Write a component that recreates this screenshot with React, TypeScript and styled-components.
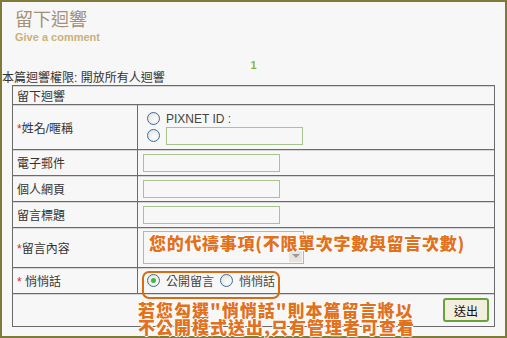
import React from "react";
import styled, { createGlobalStyle } from "styled-components";

const GlobalStyle = createGlobalStyle`
  body {
    margin: 0;
    background: #ffffff;
    font-family: "Liberation Sans", "Noto Sans CJK TC", sans-serif;
  }
`;

const CJK = `"Liberation Sans", "Noto Sans CJK TC", sans-serif`;

const Frame = styled.div`
  position: relative;
  width: 507px;
  height: 338px;
  box-sizing: border-box;
  border: 2px solid #7e7b38;
  background: #f7f7f7;
`;

const Header = styled.div`
  padding: 7px 0 0 13px;
`;

const Title = styled.h2`
  margin: 0;
  font-family: ${CJK};
  font-weight: normal;
  font-size: 18px;
  line-height: 22px;
  color: #a39078;
`;

const SubTitle = styled.div`
  font-family: "Liberation Sans", sans-serif;
  font-weight: bold;
  font-size: 11px;
  line-height: 12px;
  color: #cdb078;
`;

const Pager = styled.div`
  margin-top: 16px;
  text-align: center;
  font-family: "Liberation Sans", sans-serif;
  font-weight: bold;
  font-size: 11px;
  line-height: 13px;
  color: #8ab833;
`;

const Permission = styled.div`
  font-family: ${CJK};
  font-size: 12px;
  line-height: 13px;
  color: #333;
`;

const Table = styled.table`
  margin-left: 10px;
  width: 483px;
  border-collapse: collapse;
  border: 1px solid #6b6b6b;
  font-family: ${CJK};
  font-size: 12px;
  color: #333;
`;

const Row = styled.tr<{ $h: number }>`
  height: ${(p) => p.$h}px;
`;

const Cell = styled.td`
  border: 1px solid #6b6b6b;
  box-shadow: inset 0 1px 0 #d6d6d6;
  padding: 0 0 0 4px;
  vertical-align: middle;
`;

const LabelCell = styled(Cell)`
  width: 120px;
`;

const ValueCell = styled(Cell)`
  padding-left: 5px;
`;

const Star = styled.span`
  color: #e0202a;
`;

const TextInput = styled.div<{ $w?: number }>`
  width: ${(p) => p.$w ?? 137}px;
  height: 18px;
  box-sizing: border-box;
  border: 1px solid #a9c38c;
  background: #f7f7f7;
`;

const RadioLine = styled.div`
  display: flex;
  align-items: center;
  gap: 6px;
  height: 16px;
  & + & {
    margin-top: 1px;
  }
`;

const Radio = styled.span<{ $on?: boolean }>`
  position: relative;
  display: inline-block;
  width: 11px;
  height: 11px;
  border-radius: 50%;
  border: 1px solid #3f6c9c;
  background: radial-gradient(circle at 60% 60%, #ffffff 0%, #dcdcd6 100%);
  flex: none;
  &::after {
    content: "";
    display: ${(p) => (p.$on ? "block" : "none")};
    position: absolute;
    left: 3px;
    top: 3px;
    width: 5px;
    height: 5px;
    border-radius: 50%;
    background: #3dbb3a;
  }
`;

const RadioText = styled.span`
  font-size: 12px;
  color: #444;
`;

const NameBlock = styled.div`
  padding-left: 4px;
`;

const TextArea = styled.div`
  position: relative;
  width: 161px;
  height: 33px;
  box-sizing: border-box;
  border: 1px solid #a9c38c;
  background: #f7f7f7;
`;

const ScrollArrow = styled.div`
  position: absolute;
  right: 1px;
  bottom: 1px;
  width: 13px;
  height: 13px;
  background: #e8e4dc;
  &::after {
    content: "";
    position: absolute;
    left: 3px;
    top: 5px;
    border-left: 4px solid transparent;
    border-right: 4px solid transparent;
    border-top: 4px solid #9a9a9a;
  }
`;

const SecretGroup = styled.div`
  display: flex;
  align-items: center;
  gap: 6px;
  padding-left: 4px;
`;

const SubmitCell = styled(Cell)`
  text-align: right;
  padding-right: 5px;
`;

const SubmitButton = styled.button`
  width: 46px;
  height: 24px;
  border: 2px solid #6aa23a;
  border-radius: 3px;
  background: #f3efdf;
  font-family: ${CJK};
  font-size: 12px;
  color: #111;
  padding: 0;
`;

const Note = styled.div<{ $x: number; $y: number; $ls?: number }>`
  position: absolute;
  left: ${(p) => p.$x}px;
  top: ${(p) => p.$y}px;
  font-family: "Noto Sans CJK TC", sans-serif;
  font-weight: 900;
  font-size: 17px;
  line-height: 17px;
  letter-spacing: ${(p) => p.$ls ?? 0}px;
  white-space: nowrap;
  color: #e2711d;
  text-shadow: 1px 0 0 #fff, -1px 0 0 #fff, 0 1px 0 #fff, 0 -1px 0 #fff;
`;

const Highlight = styled.div`
  position: absolute;
  left: 140px;
  top: 269px;
  width: 134px;
  height: 24px;
  border: 2px solid #d96b12;
  border-radius: 7px;
`;

export default function App() {
  return (
    <>
      <GlobalStyle />
      <Frame>
        <Header>
          <Title>留下迴響</Title>
          <SubTitle>Give a comment</SubTitle>
        </Header>
        <Pager>1</Pager>
        <Permission>本篇迴響權限: 開放所有人迴響</Permission>
        <Table>
          <tbody>
            <Row $h={19}>
              <Cell colSpan={2}>留下迴響</Cell>
            </Row>
            <Row $h={45}>
              <LabelCell>
                <Star>*</Star>姓名/暱稱
              </LabelCell>
              <ValueCell>
                <NameBlock>
                  <RadioLine>
                    <Radio />
                    <RadioText>PIXNET ID :</RadioText>
                  </RadioLine>
                  <RadioLine>
                    <Radio />
                    <TextInput />
                  </RadioLine>
                </NameBlock>
              </ValueCell>
            </Row>
            <Row $h={26}>
              <LabelCell>電子郵件</LabelCell>
              <ValueCell>
                <TextInput />
              </ValueCell>
            </Row>
            <Row $h={26}>
              <LabelCell>個人網頁</LabelCell>
              <ValueCell>
                <TextInput />
              </ValueCell>
            </Row>
            <Row $h={26}>
              <LabelCell>留言標題</LabelCell>
              <ValueCell>
                <TextInput />
              </ValueCell>
            </Row>
            <Row $h={40}>
              <LabelCell>
                <Star>*</Star>留言內容
              </LabelCell>
              <ValueCell>
                <TextArea>
                  <ScrollArrow />
                </TextArea>
              </ValueCell>
            </Row>
            <Row $h={26}>
              <LabelCell>
                <Star>*</Star> 悄悄話
              </LabelCell>
              <ValueCell>
                <SecretGroup>
                  <Radio $on />
                  <RadioText>公開留言</RadioText>
                  <Radio />
                  <RadioText>悄悄話</RadioText>
                </SecretGroup>
              </ValueCell>
            </Row>
            <Row $h={33}>
              <SubmitCell colSpan={2}>
                <SubmitButton>送出</SubmitButton>
              </SubmitCell>
            </Row>
          </tbody>
        </Table>
        <Highlight />
        <Note $x={147} $y={232} $ls={0.7}>
          您的代禱事項(不限單次字數與留言次數)
        </Note>
        <Note $x={136} $y={299} $ls={1}>
          若您勾選"悄悄話"則本篇留言將以
          <br />
          不公開模式送出,只有管理者可查看
        </Note>
      </Frame>
    </>
  );
}
